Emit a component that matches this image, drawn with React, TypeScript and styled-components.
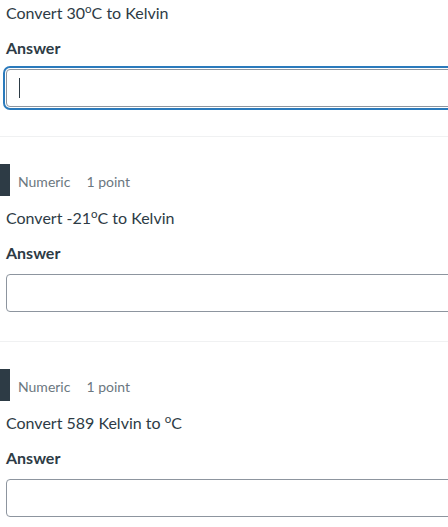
import React from "react";
import styled, { createGlobalStyle } from "styled-components";

const GlobalStyle = createGlobalStyle`
  html, body {
    margin: 0;
    padding: 0;
    background: #ffffff;
    overflow: hidden;
  }
  body {
    font-family: Lato, "Open Sans", "Liberation Sans", sans-serif;
    color: #2d3b45;
  }
`;

const Page = styled.div`
  width: 620px;
  display: flex;
  flex-direction: column;
`;

const Question = styled.section`
  display: flex;
  flex-direction: column;
`;

const Header = styled.div`
  display: flex;
  align-items: center;
  height: 32px;
`;

const Bar = styled.div`
  width: 10px;
  height: 32px;
  background: #2d3b45;
  flex-shrink: 0;
`;

const Meta = styled.div`
  display: flex;
  gap: 16px;
  margin-left: 8px;
  padding-top: 4px;
  font-size: 14px;
  line-height: 20px;
  color: #6b7780;
`;

const QuestionText = styled.p<{ $withHeader?: boolean }>`
  margin: ${(p) => (p.$withHeader ? "10px" : "1px")} 0 0;
  padding-left: 6px;
  font-size: 16px;
  line-height: 24px;
  color: #2d3b45;

  sup {
    font-size: 11.5px;
    line-height: 0;
    vertical-align: 6px;
  }
`;

const Label = styled.label`
  display: block;
  margin-top: 11px;
  padding-left: 6px;
  font-size: 16px;
  line-height: 24px;
  font-weight: 700;
  color: #2d3b45;
`;

const InputWrap = styled.div`
  position: relative;
  margin: 9px 0 0 6px;
`;

const Input = styled.div<{ $focused?: boolean }>`
  box-sizing: border-box;
  height: 38px;
  width: 100%;
  border: 1px solid #8d959f;
  border-radius: 4px;
  background: #fff;
  box-shadow: ${(p) =>
    p.$focused ? "0 0 0 1px #ffffff, 0 0 0 3px #2b7abc" : "none"};
`;

const Caret = styled.span`
  position: absolute;
  left: 13px;
  top: 9px;
  width: 1px;
  height: 20px;
  background: #2d3b45;
`;

const Divider = styled.hr`
  margin: 29px 0 27px;
  border: 0;
  height: 1px;
  background: #f0f1f2;
`;

type Q = { text: React.ReactNode; focused?: boolean; header?: boolean };

const questions: Q[] = [
  {
    text: (
      <>
        Convert 30<sup>o</sup>C to Kelvin
      </>
    ),
    focused: true,
    header: false,
  },
  {
    text: (
      <>
        Convert -21<sup>o</sup>C to Kelvin
      </>
    ),
    header: true,
  },
  {
    text: (
      <>
        Convert 589 Kelvin to <sup>o</sup>C
      </>
    ),
    header: true,
  },
];

export default function App() {
  return (
    <>
      <GlobalStyle />
      <Page>
        {questions.map((q, i) => (
          <React.Fragment key={i}>
            {i > 0 && <Divider />}
            <Question>
              {q.header && (
                <Header>
                  <Bar />
                  <Meta>
                    <span>Numeric</span>
                    <span>1 point</span>
                  </Meta>
                </Header>
              )}
              <QuestionText $withHeader={q.header}>{q.text}</QuestionText>
              <Label>Answer</Label>
              <InputWrap>
                <Input $focused={q.focused} />
                {q.focused && <Caret />}
              </InputWrap>
            </Question>
          </React.Fragment>
        ))}
      </Page>
    </>
  );
}
